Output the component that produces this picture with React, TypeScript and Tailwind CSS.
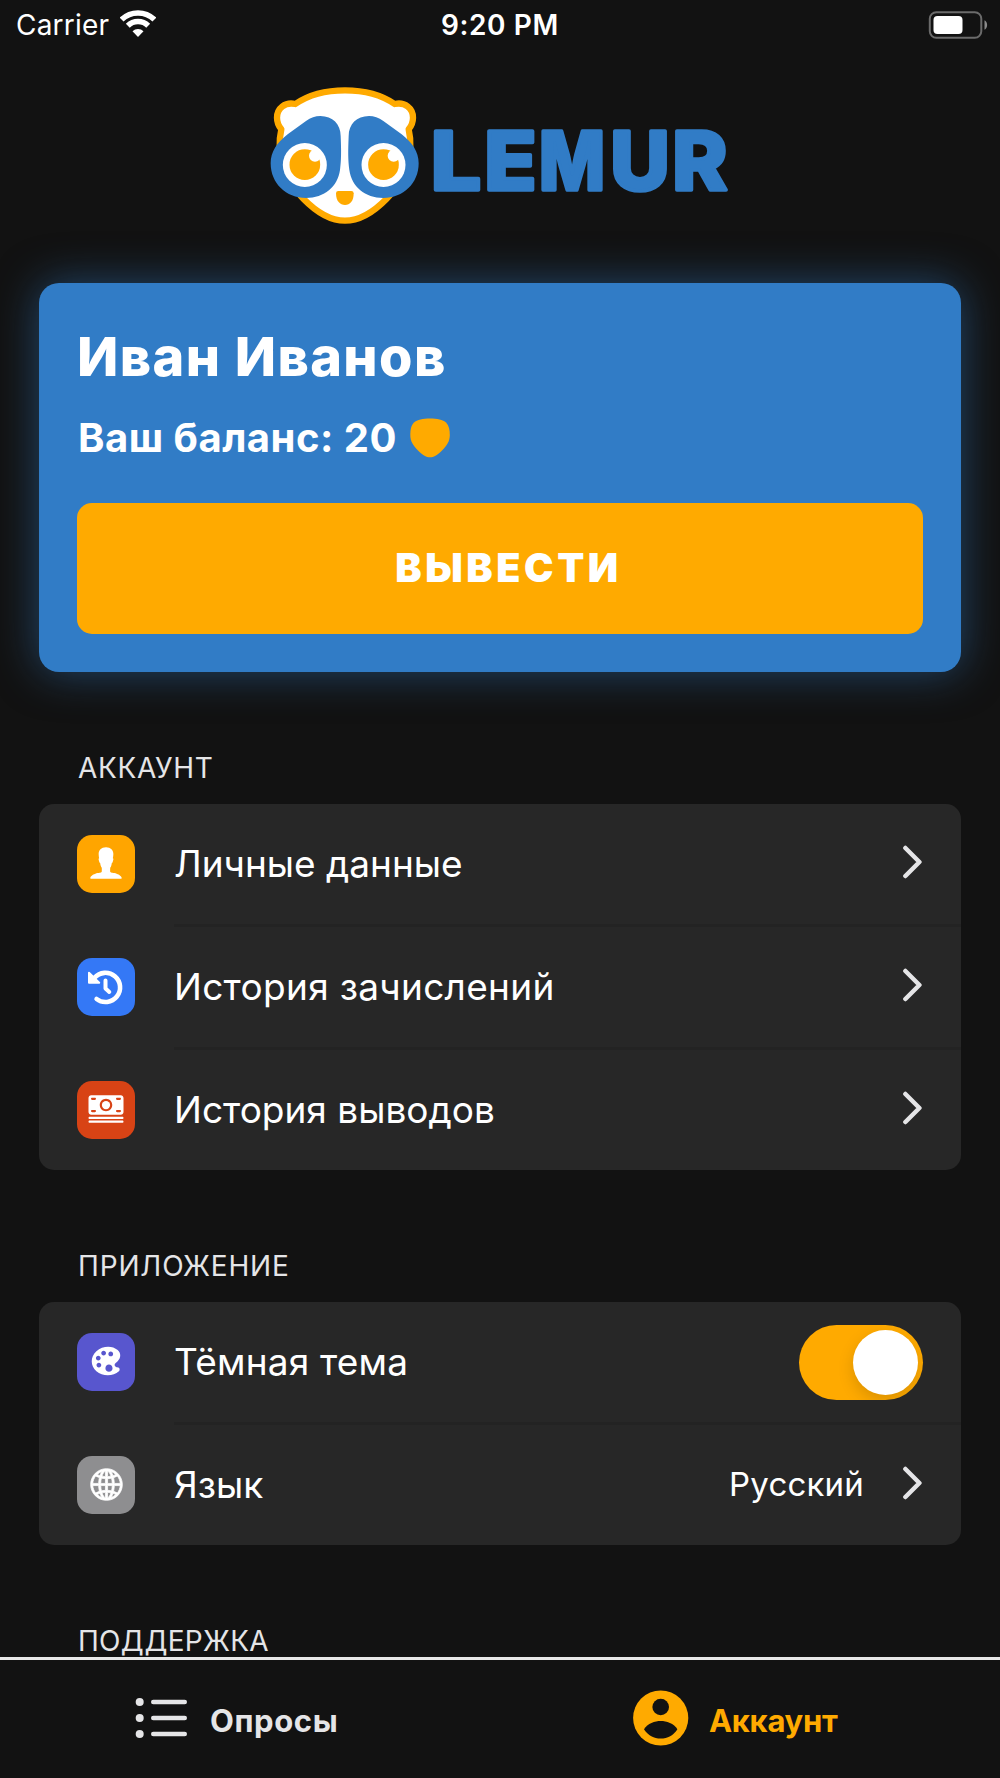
import type { ReactNode } from "react";
import { IoIosCash, IoIosColorPalette, IoIosGlobe, IoIosPerson } from "react-icons/io";

const letters = [
  { char: "L", x: 542, sx: 1.1 },
  { char: "E", x: 703, sx: 1.06 },
  { char: "M", x: 867, sx: 0.865 },
  { char: "U", x: 1081, sx: 1.01 },
  { char: "R", x: 1267, sx: 1.03 },
];

const Logo = () => (
  <svg viewBox="0 0 1500 510" className="w-[500px] h-[170px] mx-auto mt-[19px] shrink-0">
    <path
      d="M285 61C340 61 395 75 434 102C465 95 489 115 489 143C489 157 484 168 476 178C480 195 482 215 481 235C480 290 450 345 410 386C365 432 325 452 285 452C245 452 205 432 160 386C120 345 90 290 89 235C88 215 90 195 94 178C86 168 81 157 81 143C81 115 105 95 136 102C175 75 230 61 285 61Z"
      fill="#fff"
      stroke="#ffaa00"
      strokeWidth="19"
      strokeLinejoin="round"
    />
    <g fill="#317cc6">
      <path d="M357 138C320 138 296 163 296 198C294 245 294 270 298 300C305 350 345 384 400 384C460 384 506 340 506 280C506 245 487 218 455 193L400 153C386 143 372 138 357 138Z" />
      <path d="M211 138C248 138 272 163 272 198C274 245 274 270 270 300C263 350 223 384 168 384C108 384 62 340 62 280C62 245 81 218 113 193L168 153C182 143 196 138 211 138Z" />
    </g>
    <circle cx="164.500" cy="285" r="66" fill="#fff" />
    <circle cx="400.500" cy="285" r="66" fill="#fff" />
    <circle cx="164.500" cy="284" r="46" fill="#ffaa00" />
    <circle cx="400.500" cy="284" r="46" fill="#ffaa00" />
    <circle cx="195" cy="257" r="18" fill="#fff" />
    <circle cx="431" cy="257" r="18" fill="#fff" />
    <path d="M265 363H304Q311 363 311 370C311 394 300 405 285 405S258 394 258 370Q258 363 265 363Z" fill="#ffaa00" />
    <g
      className="font-['Inter',sans-serif] font-extrabold"
      fontSize="243"
      fill="#317cc6"
      stroke="#317cc6"
      strokeWidth="11"
      strokeLinejoin="round"
    >
      {letters.map((l) => (
        <text key={l.char} transform={`translate(${l.x} 360.5) scale(${l.sx} 1)`}>
          {l.char}
        </text>
      ))}
    </g>
  </svg>
);

const StatusBar = () => (
  <div className="h-[51px] shrink-0 grid grid-cols-3 items-center px-4 pb-px text-[28px] leading-none">
    <div className="flex items-center gap-[11px]">
      <span className="tracking-[0.2px]">Carrier</span>
      <svg viewBox="0 0 36 27" className="w-9 h-[27px] mb-[3px]" fill="none" stroke="#fff" strokeWidth="5.500">
        <path d="M1.600 9.600A23.500 23.500 0 0 1 34.400 9.600" />
        <path d="M7.800 15.800A14.500 14.500 0 0 1 28.200 15.800" />
        <path d="M18 27L12.500 21.200A8 8 0 0 1 23.500 21.200Z" fill="#fff" stroke="none" />
      </svg>
    </div>
    <span className="text-center font-semibold tracking-[0.6px]">9:20 PM</span>
    <svg viewBox="0 0 60 28" className="w-[60px] h-7 justify-self-end -mr-[4px]" >
      <rect x="1.800" y="1.200" width="51.500" height="25.600" rx="6.500" fill="none" stroke="#6b6b6b" strokeWidth="2" />
      <rect x="5.500" y="5" width="29" height="18" rx="4" fill="#fff" />
      <path d="M56.500 9.200C60 11 60 17 56.500 18.800Z" fill="#8a8a8a" />
    </svg>
  </div>
);

const HistoryIcon = () => (
  <svg viewBox="0 0 58 58" className="size-[58px]" fill="none" stroke="#fff" strokeLinecap="round" strokeLinejoin="round">
    <path d="M17.500 19.800A14.600 14.600 0 1 1 19.600 41" strokeWidth="4.600" />
    <path d="M28.500 22.500V30.500L32.300 34" strokeWidth="4" />
    <path d="M12 14.800V24.800H22.200Z" fill="#fff" strokeWidth="2" />
  </svg>
);

const Chevron = () => (
  <svg viewBox="0 0 20 34" className="w-5 h-[34px] mb-[5px] shrink-0" fill="none" stroke="#e5e5e7" strokeWidth="4.500" strokeLinecap="round" strokeLinejoin="round">
    <path d="M2.400 3L16.400 17L2.400 31" />
  </svg>
);

const Toggle = () => (
  <div className="w-[124px] h-[75px] rounded-full bg-[#ffaa00] p-[5px] mt-px flex justify-end overflow-hidden">
    <div className="size-[65px] rounded-full bg-white shadow-[0_6px_16px_rgba(0,0,0,0.15)]" />
  </div>
);

type RowProps = { icon: ReactNode; color: string; label: string; spacing?: string; children?: ReactNode };

const Row = ({ icon, color, label, spacing = "", children }: RowProps) => (
  <div className="group flex flex-col">
    <div className="h-[120px] flex items-center pl-[38px] pr-[38px]">
      <div className={`size-[58px] rounded-[15px] flex items-center justify-center text-white ${color}`}>{icon}</div>
      <span className={`ml-[39px] mb-[2px] flex-1 text-[37px] leading-none text-white ${spacing}`}>{label}</span>
      {children ?? <Chevron />}
    </div>
    <div className="ml-[135px] h-[3px] bg-[#232323] group-last:hidden" />
  </div>
);

const Heading = ({ text, spacing }: { text: string; spacing: string }) => (
  <h2 className={`mt-[76px] mb-4 pl-[78px] h-10 leading-10 shrink-0 text-[28px] text-[#e5e5e7] ${spacing}`}>{text}</h2>
);

const Group = ({ children }: { children: ReactNode }) => (
  <div className="mx-[39px] rounded-[15px] bg-[#272727] shrink-0">{children}</div>
);

const App = () => (
  <div className="h-[1778px] w-full flex flex-col bg-[#121212] text-white font-['Inter',sans-serif]">
    <main className="flex-1 min-h-0 flex flex-col overflow-hidden">
      <StatusBar />
      <Logo />

      {/* Balance card */}
      <section className="mt-[43px] mx-[39px] h-[389px] shrink-0 rounded-[20px] bg-[#317cc6] px-[38px] pt-[42px] shadow-[0_0_44px_rgba(49,124,198,0.5)]">
        <h1 className="h-16 leading-[64px] text-[54px] font-extrabold tracking-[1.4px]">Иван Иванов</h1>
        <div className="mt-[19px] h-[60px] flex items-center gap-[13px] pl-px">
          <span className="text-[40px] leading-none font-bold tracking-[0.5px]">Ваш баланс: 20</span>
          <svg viewBox="0 0 40 40" className="size-10 mb-px" fill="#ffaa00">
            <path d="M20 0.500C27 0.500 33 1.800 36 4.500C39 7.500 39.800 12 39.800 17C39.800 23 37 27.500 32.500 32C27 37.500 23.500 39.300 20 39.300S13 37.500 7.500 32C3 27.500 0.300 23 0.300 17C0.300 12 1 7.500 4 4.500C7 1.800 13 0.500 20 0.500Z" />
          </svg>
        </div>
        <button className="mt-[35px] w-full h-[131px] pt-px pl-[17px] rounded-[15px] bg-[#ffaa00] text-[39.5px] font-black tracking-[3.6px]">
          ВЫВЕСТИ
        </button>
      </section>

      <Heading text="АККАУНТ" spacing="tracking-[0.65px]" />
      <Group>
        <Row icon={<IoIosPerson size={42} className="mb-[3px]" />} color="bg-[#ffa500]" label="Личные данные" />
        <Row icon={<HistoryIcon />} color="bg-[#3478f6]" label="История зачислений" spacing="tracking-[0.3px]" />
        <Row icon={<IoIosCash size={40} className="mb-[2px]" />} color="bg-[#d84315]" label="История выводов" />
      </Group>

      <Heading text="ПРИЛОЖЕНИЕ" spacing="tracking-[0.85px]" />
      <Group>
        <Row icon={<IoIosColorPalette size={38} className="mb-[3px]" />} color="bg-[#5856ce]" label="Тёмная тема" spacing="tracking-[0.2px]">
          <Toggle />
        </Row>
        <Row icon={<IoIosGlobe size={39} className="mb-[2px] stroke-current stroke-[10]" />} color="bg-[#8e8e90]" label="Язык">
          <span className="mr-[39px] mb-[2px] text-[33px] leading-none tracking-[0.2px]">Русский</span>
          <Chevron />
        </Row>
      </Group>

      <Heading text="ПОДДЕРЖКА" spacing="tracking-[0.25px]" />
    </main>

    {/* Tab bar */}
    <nav className="h-[121px] shrink-0 border-t-[3px] border-[#e8e8e8] pb-[2px] grid grid-cols-2 text-[31px] font-bold leading-none">
      <div className="flex items-center pl-[135px] gap-[23px] text-[#e5e5e7]">
        <svg viewBox="0 0 52 42" className="w-[52px] h-[42px]" fill="currentColor">
          {[5, 21, 37].map((y) => (
            <g key={y}>
              <circle cx="4.700" cy={y} r="4" />
              <rect x="16" y={y - 2.3} width="36" height="4.600" rx="2.300" />
            </g>
          ))}
        </svg>
        <span className="mt-1 tracking-[0.6px]">Опросы</span>
      </div>
      <div className="flex items-center pl-[133px] gap-[20px] text-[#ffaa00]">
        <svg viewBox="0 0 56 56" className="size-14">
          <circle cx="27.700" cy="28" r="27.600" fill="#ffaa00" />
          <circle cx="27.700" cy="17" r="8.300" fill="#121212" />
          <path d="M11 39.300C14.500 33.500 22 31 27.700 31S41 33.500 44.400 39.300C40.500 45.500 34.500 48.600 27.700 48.600S15 45.500 11 39.300Z" fill="#121212" />
        </svg>
        <span className="mt-1 tracking-[-0.3px]">Аккаунт</span>
      </div>
    </nav>
  </div>
);

export default App;
